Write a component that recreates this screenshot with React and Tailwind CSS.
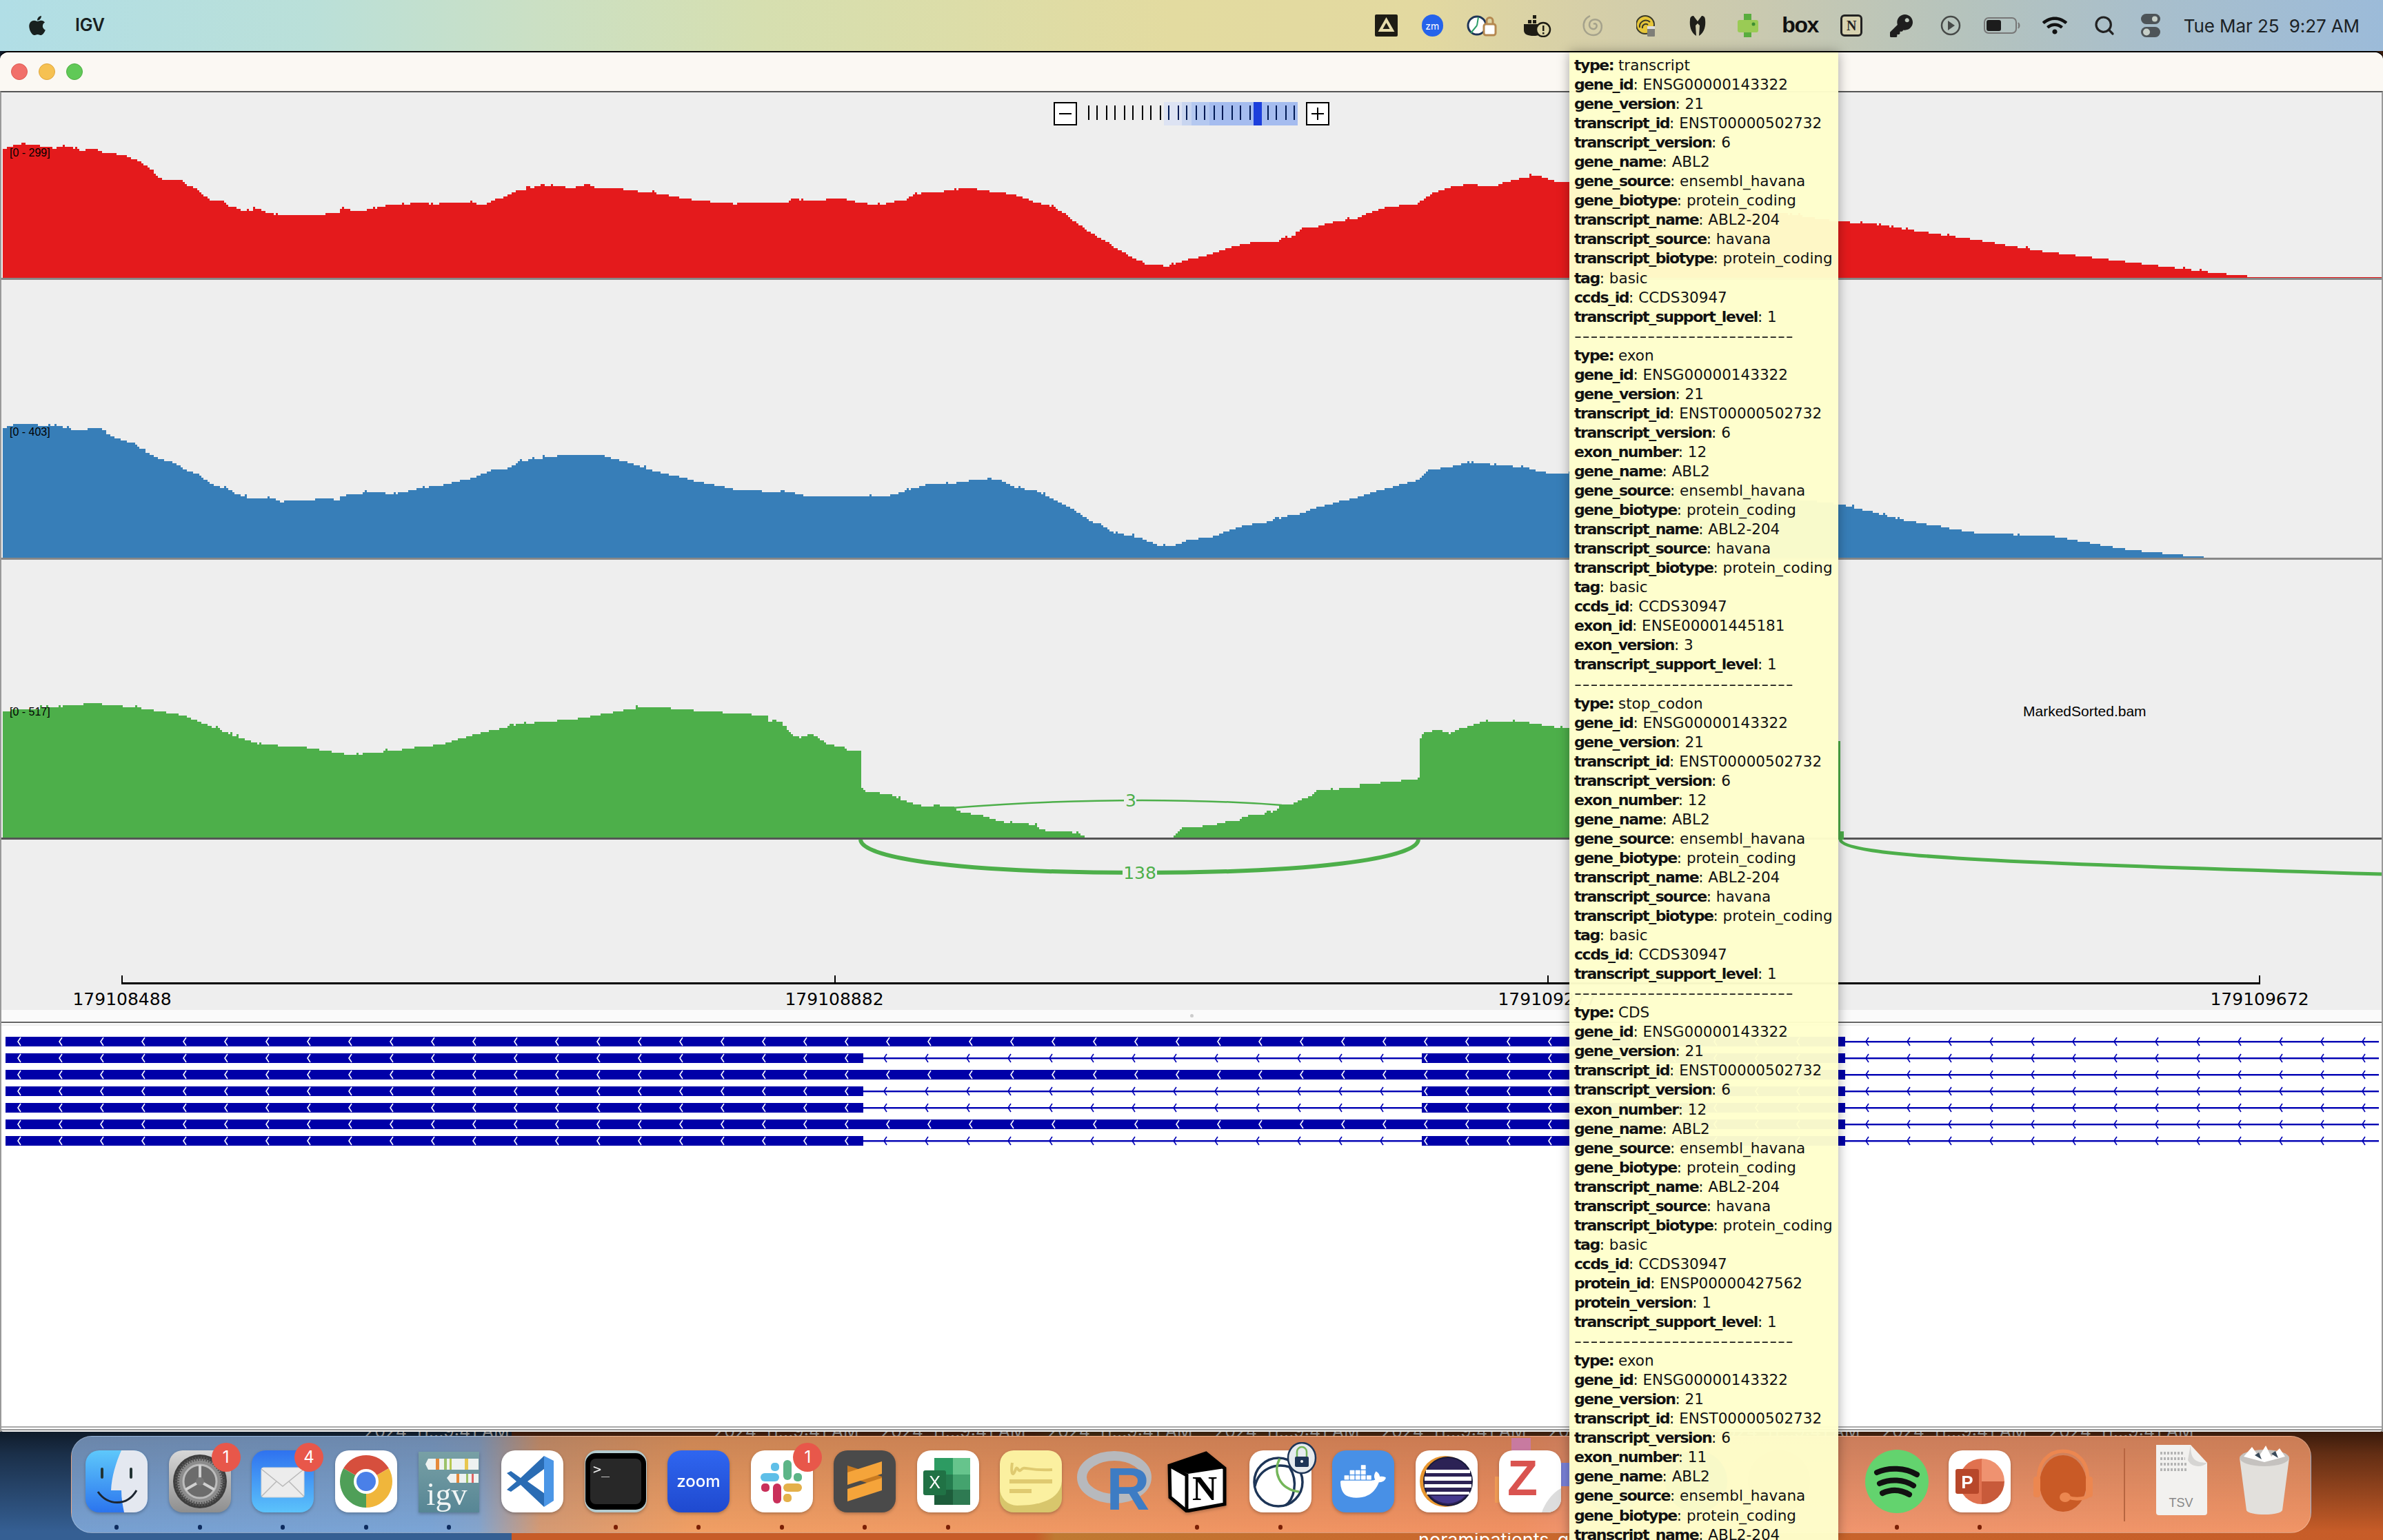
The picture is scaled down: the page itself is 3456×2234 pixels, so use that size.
import React from "react";
import { FaApple, FaKey, FaWifi } from "react-icons/fa";
import { SiDocker } from "react-icons/si";
import { Search } from "lucide-react";

/* ---------- coverage data (page coordinates) ---------- */
const z11 = (a) => a.map(([x, y]) => [x / 1.363, 190 + y / 2.489]);
const z12 = (a) => a.map(([x, y]) => [1150 + x / 1.382, 190 + y / 2.489]);
const sh = (a) => a.map(([x, y]) => [x * 2.2041, y * 2.2035]);

const RED = [
  ...z11([[5,65],[30,50],[45,45],[65,52],[92,55],[105,62],[140,58],[160,72],[185,62],[205,80],[225,82],[250,92],[275,110],[290,130],[305,160],[320,173],[355,175],[370,198],[385,205],[395,225],[415,250],[440,255],[460,283],[490,288],[510,282],[530,297],[545,303],[630,305],[650,296],[668,295],[673,275],[700,290],[730,284],[760,270],[800,270],[820,255],[850,264],[900,260],[930,255],[945,268],[960,265],[970,250],[995,240],[1010,222],[1030,213],[1070,195],[1110,200],[1125,207],[1160,193],[1180,207],[1220,208],[1260,218],[1310,228],[1350,245],[1400,255],[1450,263],[1500,258],[1560,258]]),
  ...z12([[0,245],[40,255],[90,240],[130,258],[170,268],[200,255],[225,248],[240,228],[300,218],[350,205],[400,220],[440,228],[470,250],[520,275],[540,295],[565,330],[600,375],[630,405],[660,440],[680,460],[710,485],[750,487],[790,465],[830,448],[870,422],[910,405],[970,398],[1000,380],[1020,352],[1050,345],[1080,330],[1130,315],[1160,290],[1190,275],[1250,263],[1280,225],[1310,205],[1350,192],[1400,203],[1440,178],[1490,160],[1530,185],[1562,185]]),
  ...sh([[1210,146],[1230,147],[1260,152],[1300,158],[1340,165],[1380,170],[1420,175],[1460,180],[1490,183],[1567,183]]),
];
const BLUE = [
  ...z11([[5,1072],[25,1060],[60,1056],[90,1068],[120,1068],[150,1082],[190,1072],[205,1078],[210,1095],[240,1118],[265,1128],[285,1160],[310,1182],[345,1198],[360,1222],[390,1240],[420,1280],[455,1298],[475,1322],[540,1328],[555,1342],[565,1335],[615,1332],[635,1326],[668,1332],[672,1320],[690,1312],[730,1305],[780,1310],[830,1290],[870,1280],[900,1265],[930,1255],[970,1225],[1000,1220],[1030,1192],[1080,1178],[1120,1168],[1185,1170],[1230,1192],[1260,1210],[1300,1232],[1345,1250],[1380,1268],[1430,1285],[1460,1298],[1530,1302],[1560,1306]]),
  ...z12([[0,1310],[40,1322],[130,1320],[190,1318],[230,1296],[270,1275],[310,1278],[340,1265],[390,1255],[410,1258],[440,1285],[490,1302],[520,1330],[560,1365],[590,1405],[625,1430],[640,1450],[700,1472],[730,1498],[760,1500],[790,1475],[830,1470],[870,1445],[900,1425],[950,1412],[980,1395],[1010,1385],[1050,1358],[1110,1333],[1160,1305],[1200,1285],[1255,1258],[1270,1225],[1310,1215],[1360,1195],[1400,1205],[1470,1215],[1490,1228],[1530,1240],[1562,1235]]),
  ...sh([[1210,332],[1250,342],[1300,351],[1350,353],[1400,362],[1450,367],[1470,368],[1567,368]]),
];
const GREEN = [
  ...sh([[2,468],[30,466],[60,463],[90,466],[120,471],[150,483],[170,490],[200,492],[230,497],[260,494],[290,490],[310,484],[340,477],[380,473],[425,465],[460,468],[490,470]]),
  [1100,1038],[1111,1038],[1113,1046],[1130,1046],[1138,1055],[1150,1068],[1160,1070],[1176,1064],[1199,1080],[1221,1083],[1231,1090],[1247,1090],[1248,1144],[1253,1148],[1272,1150],[1291,1153],[1307,1160],[1323,1166],[1342,1170],[1355,1168],[1381,1171],[1393,1178],[1422,1183],[1444,1190],[1460,1194],[1500,1196],[1508,1204],[1534,1206],[1559,1208],[1575,1215],[1701,1215],[1706,1207],[1713,1200],[1754,1198],[1776,1192],[1795,1192],[1801,1186],[1811,1182],[1833,1182],[1849,1175],[1859,1166],[1875,1166],[1884,1160],[1900,1155],[1909,1146],[1951,1144],[1969,1144],[1970,1138],[1996,1136],[2034,1132],[2055,1132],[2055,1128],[2058,1128],[2059,1070],[2063,1064],[2082,1058],[2100,1064],[2150,1046],[2200,1046],[2276,1058],[2300,1216],
];

function profile(points, base, seed) {
  const x0 = 4;
  const x1 = points[points.length - 1][0];
  let i = 0;
  let d = `M${x0} ${base}`;
  let n = 0;
  for (let x = x0; x < x1; x += 3) {
    while (i < points.length - 2 && points[i + 1][0] <= x) i++;
    const [ax, ay] = points[i];
    const [bx, by] = points[i + 1];
    const t = bx === ax ? 1 : Math.min(1, Math.max(0, (x - ax) / (bx - ax)));
    let y = ay + (by - ay) * t;
    const h = Math.abs(Math.sin((n + seed) * 12.9898) * 43758.5453) % 1;
    if (h > 0.95 && y < base - 6) y -= 3;
    y = Math.min(base, Math.round(y / 3) * 3);
    d += `L${x} ${y}L${x + 3} ${y}`;
    n++;
  }
  return d + `L${x1} ${base}Z`;
}

function Coverage({ top, height, base, points, color, seed, line, children }) {
  return (
    <svg className="block" width="3452" height={height} viewBox={`2 ${top} 3452 ${height}`} shapeRendering="crispEdges">
      <path d={profile(points, base, seed)} fill={color} />
      <rect x="2" y={base} width="3452" height="3" fill={line} />
      {children}
    </svg>
  );
}

/* ---------- popup text ---------- */
const GID = ["gene_id", "ENSG00000143322"];
const GV = ["gene_version", "21"];
const TID = ["transcript_id", "ENST00000502732"];
const TV = ["transcript_version", "6"];
const GN = ["gene_name", "ABL2"];
const GS = ["gene_source", "ensembl_havana"];
const GB = ["gene_biotype", "protein_coding"];
const TN = ["transcript_name", "ABL2-204"];
const TS = ["transcript_source", "havana"];
const TB = ["transcript_biotype", "protein_coding"];
const TAG = ["tag", "basic"];
const CC = ["ccds_id", "CCDS30947"];
const TSL = ["transcript_support_level", "1"];
const DASH = ["---"];
const EN = (n) => ["exon_number", n];
const TY = (t) => ["type", t];
const POPUP = [
  TY("transcript"), GID, GV, TID, TV, GN, GS, GB, TN, TS, TB, TAG, CC, TSL, DASH,
  TY("exon"), GID, GV, TID, TV, EN("12"), GN, GS, GB, TN, TS, TB, TAG, CC, ["exon_id", "ENSE00001445181"], ["exon_version", "3"], TSL, DASH,
  TY("stop_codon"), GID, GV, TID, TV, EN("12"), GN, GS, GB, TN, TS, TB, TAG, CC, TSL, DASH,
  TY("CDS"), GID, GV, TID, TV, EN("12"), GN, GS, GB, TN, TS, TB, TAG, CC, ["protein_id", "ENSP00000427562"], ["protein_version", "1"], TSL, DASH,
  TY("exon"), GID, GV, TID, TV, EN("11"), GN, GS, GB, TN,
];

function Popup() {
  return (
    <div className="absolute left-[2276px] top-[76px] bottom-0 z-[4] w-[390px] overflow-hidden bg-[#ffffcc]/[.965] pl-[7px] pt-[5px] shadow-[0_0_16px_rgba(0,0,0,.35)] font-['DejaVu_Sans',sans-serif] text-[21.5px] leading-[28.04px] text-[#111] whitespace-nowrap">
      {POPUP.map((l, i) =>
        l[0] === "---" ? (
          <div key={i} className="w-max origin-left scale-x-[1.42] tracking-[0.55px]">{"-".repeat(27)}</div>
        ) : (
          <div key={i}>
            <b className="text-[22px] font-bold tracking-[-1.45px]">{l[0]}{l[0] === "type" ? ":" : ""}</b>
            {l[0] === "type" ? " " : ": "}
            {l[1]}
          </div>
        )
      )}
    </div>
  );
}

/* ---------- menu bar ---------- */
const MENU = [
  ["w-[67px]", <svg width="33" height="32" viewBox="0 0 33 32"><rect width="33" height="32" rx="2" fill="#1e1c14" /><path d="M16.5 8 L25 23 H8Z" fill="none" stroke="#e6dcab" strokeWidth="4" /></svg>],
  ["w-[67px]", <div className="flex h-[32px] w-[31px] items-center justify-center rounded-full bg-[#2563eb] font-['Inter',sans-serif] text-[14px] text-white">zm</div>],
  ["w-[77px]", <svg width="46" height="34" viewBox="0 0 46 34"><circle cx="16" cy="17" r="13" fill="#fff" stroke="#1f3557" strokeWidth="3" /><path d="M16 17 L7 28 M16 17 L18 5" stroke="#2f9e6a" strokeWidth="2" fill="none" /><rect x="26" y="15" width="17" height="16" rx="3" fill="#fff" stroke="#b58850" strokeWidth="3" /><path d="M30 15 V10 a4.5 4.5 0 0 1 9 0 V15" fill="none" stroke="#b58850" strokeWidth="3" /></svg>],
  ["w-[83px]", <svg width="42" height="34" viewBox="0 0 42 34"><path d="M2 15 H30 V24 C30 30 24 32 16 32 C8 32 2 30 2 24Z" fill="#1e1c14" /><rect x="8" y="9" width="5" height="5" fill="#1e1c14" /><rect x="15" y="9" width="5" height="5" fill="#1e1c14" /><rect x="15" y="2" width="5" height="5" fill="#1e1c14" /><circle cx="30" cy="23" r="10" fill="#ded7a8" stroke="#1e1c14" strokeWidth="2.5" /><rect x="29" y="17" width="2.5" height="8" fill="#1e1c14" /><rect x="29" y="27" width="2.5" height="2.5" fill="#1e1c14" /></svg>],
  ["w-[79px]", <svg width="34" height="34" viewBox="0 0 34 34" fill="none" stroke="#a5a28c" strokeWidth="2.5"><path d="M13 3 C5 7 3 14 4 20 C6 29 15 33 23 30 C31 26 32 15 26 10 C20 6 12 9 12 16 C12 22 19 24 22 20 C24 16 21 13 18 15" /></svg>],
  ["w-[75.5px]", <svg width="30" height="34" viewBox="0 0 30 34"><circle cx="13" cy="16" r="13" fill="#e6c63a" stroke="#3a3a2a" strokeWidth="2" /><path d="M5 20 a9 9 0 0 1 15 -8 M9 21 a5 5 0 0 1 8 -5" stroke="#3a3a2a" strokeWidth="2" fill="none" /><rect x="16" y="18" width="11" height="15" rx="1" fill="#7f7f78" /><rect x="16" y="18" width="11" height="4" fill="#ddd" /></svg>],
  ["w-[73px]", <svg width="26" height="32" viewBox="0 0 26 32"><path d="M2 8 C2 4 4 2 7 2 L13 10 L19 2 C22 2 24 4 24 8 C25 16 23 26 15 31 L16 16 L13 13 L10 16 L11 31 C3 26 1 16 2 8Z" fill="#1e1e1a" /></svg>],
  ["w-[74px]", <svg width="30" height="34" viewBox="0 0 30 34"><rect x="9" y="0" width="11" height="34" fill="#5aad3f" /><rect x="0" y="9" width="30" height="18" rx="3" fill="#9acb55" /><circle cx="23" cy="15" r="2.5" fill="#3e8e32" /></svg>],
  ["w-[76.5px]", <span className="font-['Liberation_Sans',sans-serif] text-[32px] font-bold leading-none tracking-[-1.5px] text-[#111] relative top-[-1px]">box</span>],
  ["w-[73px]", <div className="flex h-[32px] w-[32px] items-center justify-center rounded-[6px] border-[3px] border-[#222] bg-[#d7d2b0] font-['Liberation_Serif',serif] text-[20px] font-bold text-[#222]">N</div>],
  ["w-[70.5px]", <FaKey className="text-[#1e1e1e]" size={33} />],
  ["w-[72.5px]", <svg width="30" height="32" viewBox="0 0 30 32"><circle cx="15" cy="16" r="13" fill="none" stroke="#474a48" strokeWidth="2.5" /><path d="M11 9 L21 16 L11 23Z" fill="#474a48" /></svg>],
  ["w-[77.5px]", <svg width="54" height="26" viewBox="0 0 54 26"><rect x="1" y="2" width="46" height="22" rx="6" fill="none" stroke="#777" strokeWidth="2" /><rect x="4" y="5" width="21" height="16" rx="3" fill="#1c1c1c" /><path d="M50 9 q3 4 0 8" fill="#777" stroke="#777" strokeWidth="2" /></svg>],
  ["w-[76px]", <FaWifi className="text-[#111]" size={36} />],
  ["w-[68px]", <Search className="text-[#222]" size={32} strokeWidth={2.4} />],
  ["w-[65.5px]", <svg width="28" height="36" viewBox="0 0 28 36"><rect x="0" y="1" width="28" height="15" rx="7.5" fill="#4d5458" /><circle cx="20" cy="8.5" r="4" fill="#c6cfc8" /><rect x="0" y="20" width="28" height="15" rx="7.5" fill="#4d5458" /><circle cx="8" cy="27.5" r="5" fill="#c6cfc8" /></svg>],
];

function MenuBar() {
  return (
    <div className="flex h-[74px] shrink-0 items-center bg-[linear-gradient(90deg,#b1dee6_0px,#bae0d9_450px,#cbe0c4_780px,#d6dfb0_1100px,#e3dba0_1700px,#e3d9a0_2060px,#d6cfa8_2300px,#c9c9b0_2560px,#b5c3bd_2850px,#a9bfcb_3100px,#9cbbd9_3456px)]">
      <FaApple className="ml-[38px] text-[#18201f]" size={32} />
      <span className="ml-[39px] font-['Inter',sans-serif] text-[25px] font-semibold tracking-[-0.2px] text-[#18201f]">IGV</span>
      <div className="ml-auto flex items-center">
        {MENU.map(([w, el], i) => (
          <div key={i} className={`${w} flex justify-center`}>{el}</div>
        ))}
      </div>
      <span className="ml-[15px] mr-[34px] whitespace-pre font-['Inter',sans-serif] text-[26px] tracking-[-0.1px] text-[#1c2226]">Tue Mar 25  9:27 AM</span>
    </div>
  );
}

/* ---------- zoom slider ---------- */
const TICKS = [1578, 1590, 1604, 1616, 1630, 1642, 1656, 1668, 1682, 1694, 1708, 1720, 1734, 1746, 1760, 1772, 1786, 1798, 1812, 1838, 1850, 1864, 1876];

function Slider() {
  return (
    <div className="absolute left-[1526px] top-[14px] flex h-[34px] items-stretch">
      <div className="flex w-[34px] items-center justify-center border-2 border-black bg-white">
        <div className="h-[2px] w-[18px] bg-black" />
      </div>
      <div className="relative ml-[10px] w-[310px]">
        <div className="absolute inset-y-0 left-[116px] w-[26px] bg-[#dde3f3]" />
        <div className="absolute inset-y-0 left-[142px] w-[14px] bg-[#c8d5f0]" />
        <div className="absolute inset-y-0 left-[156px] w-[26px] bg-[#b4c8f0]" />
        <div className="absolute inset-y-0 left-[182px] w-[128px] bg-[#a5bcef]" />
        {TICKS.map((x) => (
          <div key={x} className={`absolute top-[5px] h-[21px] w-[2px] ${x < 1688 ? "bg-black" : "bg-[#001a55]"}`} style={{ left: x - 1572 }} />
        ))}
        <div className="absolute inset-y-0 left-[246px] w-[12px] bg-[#1c3fdc]" />
      </div>
      <div className="absolute left-[366px] flex h-[34px] w-[34px] items-center justify-center border-2 border-black bg-white">
        <div className="relative h-[18px] w-[18px]">
          <div className="absolute left-0 top-[8px] h-[2px] w-[18px] bg-black" />
          <div className="absolute left-[8px] top-0 h-[18px] w-[2px] bg-black" />
        </div>
      </div>
    </div>
  );
}

/* ---------- gene track ---------- */
function chevrons(xs, cy, color, key) {
  return xs.map((x) => (
    <path key={`${key}-${x}`} d={`M${x + 2} ${cy - 6} L${x - 2} ${cy} L${x + 2} ${cy + 6}`} stroke={color} strokeWidth="1.6" fill="none" />
  ));
}
const range = (a, b, s) => {
  const r = [];
  for (let x = a; x <= b; x += s) r.push(x);
  return r;
};

function GeneTrack() {
  const rows = [true, false, true, false, false, true, false];
  return (
    <svg className="block" width="3452" height="584" viewBox="2 1484 3452 584">
      <rect x="2" y="1486" width="3452" height="2" fill="#efefef" />
      {rows.map((full, i) => {
        const cy = 1511 + 24 * i;
        const thick = (a, b) => <rect x={a} y={cy - 7} width={b - a} height="14" fill="#0000a8" />;
        return (
          <g key={i}>
            <rect x="2672" y={cy - 1} width="778" height="2.4" fill="#0000b4" />
            {full ? (
              thick(8, 2676)
            ) : (
              <g>
                {thick(8, 1252)}
                <rect x="1252" y={cy - 1} width="810" height="2.4" fill="#0000b4" />
                {thick(2062, 2676)}
              </g>
            )}
            {chevrons(range(28, full ? 2660 : 1240, 60), cy, "#fff", "w" + i)}
            {!full && chevrons(range(2068, 2660, 60), cy, "#fff", "x" + i)}
            {!full && chevrons(range(1284, 2040, 60), cy, "#0000b4", "b" + i)}
            {chevrons(range(2708, 3440, 60), cy, "#0000b4", "r" + i)}
          </g>
        );
      })}
    </svg>
  );
}

/* ---------- dock icons ---------- */
const Box = ({ children, className = "" }) => (
  <svg className={`drop-shadow-[0_2px_2px_rgba(0,0,0,.25)] ${className}`} width="90" height="90" viewBox="0 0 90 90">{children}</svg>
);
const Grad = ({ id, from, to }) => (
  <defs><linearGradient id={id} x1="0" y1="0" x2="0" y2="1"><stop offset="0" stopColor={from} /><stop offset="1" stopColor={to} /></linearGradient></defs>
);
const W = () => <rect width="90" height="90" rx="20" fill="#fff" />;

const Finder = () => (
  <Box>
    <Grad id="fi" from="#5ec8fb" to="#2b74ee" />
    <rect width="90" height="90" rx="20" fill="url(#fi)" />
    <path d="M52 0 H70 A20 20 0 0 1 90 20 V70 A20 20 0 0 1 70 90 H56 C54 80 52 70 52 58 H37 C38 38 44 18 52 0Z" fill="#e4e8f0" />
    <rect x="22" y="25" width="4" height="16" rx="2" fill="#233" />
    <rect x="64" y="25" width="4" height="16" rx="2" fill="#233" />
    <path d="M18 60 C32 80 60 82 74 58" stroke="#1c2530" strokeWidth="3" fill="none" />
  </Box>
);
const Settings = () => (
  <Box>
    <Grad id="se" from="#d8d8d8" to="#8e8e8e" />
    <rect width="90" height="90" rx="20" fill="url(#se)" />
    <circle cx="45" cy="45" r="39" fill="#3e3e3e" />
    <circle cx="45" cy="45" r="33" fill="#8c8c8c" stroke="#555" strokeWidth="6" strokeDasharray="2 2" />
    <circle cx="45" cy="45" r="24" fill="#6c6c6c" stroke="#bbb" strokeWidth="3" />
    <path d="M45 45 V21 M45 45 L24 57 M45 45 L66 57" stroke="#d0d0d0" strokeWidth="4" />
    <circle cx="45" cy="45" r="6" fill="#777" />
  </Box>
);
const Mail = () => (
  <Box>
    <Grad id="ma" from="#2f72ef" to="#5cc3fb" />
    <rect width="90" height="90" rx="20" fill="url(#ma)" />
    <rect x="14" y="25" width="62" height="43" rx="3" fill="#ececec" stroke="#d5d5d5" />
    <path d="M14 27 L45 52 L76 27 M14 67 L36 45 M76 67 L54 45" stroke="#b9b9b9" strokeWidth="1.5" fill="none" />
  </Box>
);
const Chrome = () => (
  <Box>
    <W />
    <path d="M45 45 L12.1 26 A38 38 0 0 1 77.9 26Z" fill="#d64f3d" />
    <path d="M45 45 L77.9 26 A38 38 0 0 1 45 83Z" fill="#f0b63b" />
    <path d="M45 45 L45 83 A38 38 0 0 1 12.1 26Z" fill="#4f9f58" />
    <circle cx="45" cy="45" r="18" fill="#fff" />
    <circle cx="45" cy="45" r="14" fill="#4a80e8" />
  </Box>
);
const Igv = () => (
  <Box>
    <Grad id="ig" from="#78a0a5" to="#578695" />
    <rect x="1" y="2" width="88" height="88" fill="url(#ig)" />
    <path d="M15 12 H88 V28 H15 L11 20Z" fill="#eef2f0" />
    <rect x="26" y="12" width="5" height="16" fill="#e58a3a" />
    <rect x="38" y="12" width="4" height="16" fill="#9cc26a" />
    <rect x="46" y="12" width="3" height="16" fill="#b7c84f" />
    <rect x="68" y="12" width="5" height="16" fill="#e8c74f" />
    <path d="M47 34 H88 V47 H47 L42 40Z" fill="#eef2f0" />
    <rect x="56" y="34" width="4" height="13" fill="#e58a3a" />
    <rect x="70" y="34" width="3" height="13" fill="#9cc26a" />
    <rect x="78" y="34" width="3" height="13" fill="#d66" />
    <text x="42" y="79" textAnchor="middle" fontFamily="'Liberation Serif',serif" fontSize="46" fill="#f0f5f5">igv</text>
  </Box>
);
const VsCode = () => (
  <Box>
    <W />
    <path d="M62 8 L76 15 V73 L62 82Z" fill="#4b96e6" />
    <path d="M62 8 L28 40 L14 30 L8 33 L22 45 L8 57 L14 60 L28 50 L62 82 V62 L38 45 L62 27Z" fill="#2a6cb4" />
  </Box>
);
const Terminal = () => (
  <Box>
    <rect width="90" height="90" rx="18" fill="#b4ccd0" />
    <rect x="1" y="4" width="88" height="82" rx="15" fill="#000" />
    <rect x="8" y="12" width="74" height="66" rx="8" fill="#282828" />
    <text x="12" y="34" fontFamily="'DejaVu Sans Mono',monospace" fontSize="20" fill="#eee">&gt;_</text>
  </Box>
);
const Zoom = () => (
  <Box>
    <Grad id="zo" from="#2f66f0" to="#1f49cf" />
    <rect width="90" height="90" rx="20" fill="url(#zo)" />
    <text x="45" y="53" textAnchor="middle" fontFamily="'Inter',sans-serif" fontSize="24" fontWeight="500" fill="#fff">zoom</text>
  </Box>
);
const Slack = () => (
  <Box>
    <W />
    <rect x="14" y="33" width="27" height="12" rx="6" fill="#5fbfe8" />
    <rect x="29" y="18" width="12" height="12" rx="5" fill="#5fbfe8" />
    <rect x="47" y="14" width="12" height="29" rx="6" fill="#5cb587" />
    <rect x="62" y="33" width="12" height="12" rx="5" fill="#5cb587" />
    <rect x="32" y="48" width="12" height="29" rx="6" fill="#c9305a" />
    <rect x="15" y="48" width="12" height="12" rx="5" fill="#c9305a" />
    <rect x="47" y="48" width="27" height="12" rx="6" fill="#e4b04a" />
    <rect x="47" y="63" width="12" height="12" rx="5" fill="#e4b04a" />
  </Box>
);
const Sublime = () => (
  <Box>
    <rect width="90" height="90" rx="20" fill="#4a4a4a" />
    <path d="M20 38 L70 54 V38 L20 22Z" fill="#c87a20" />
    <path d="M20 32 L70 16 V34 L20 50Z" fill="#f5a43a" />
    <path d="M20 56 L70 40 V58 L20 74Z" fill="#f5a43a" />
  </Box>
);
const Excel = () => (
  <Box>
    <W />
    <rect x="25" y="11" width="27" height="24" fill="#2d9b62" />
    <rect x="52" y="11" width="25" height="24" fill="#66c48c" />
    <rect x="25" y="35" width="27" height="22" fill="#247c4e" />
    <rect x="52" y="35" width="25" height="22" fill="#44a36e" />
    <rect x="25" y="57" width="27" height="22" fill="#1d5d3b" />
    <rect x="52" y="57" width="25" height="22" fill="#2e7a52" />
    <rect x="9" y="29" width="33" height="36" rx="3" fill="#207245" />
    <text x="25.5" y="55" textAnchor="middle" fontFamily="'Liberation Sans',sans-serif" fontSize="25" fill="#fff">X</text>
  </Box>
);
const Stickies = () => (
  <Box>
    <rect y="30" width="90" height="60" rx="20" fill="#d8c66c" />
    <path d="M0 20 A20 20 0 0 1 20 0 H70 A20 20 0 0 1 90 20 V45 C88 65 70 80 25 80 A25 25 0 0 1 0 55Z" fill="#fbf0a0" />
    <path d="M18 18 C16 30 18 40 22 30 C26 18 26 34 31 28 C36 22 40 30 76 28" stroke="#dfca70" strokeWidth="4" fill="none" />
    <rect x="14" y="42" width="62" height="6" fill="#dfca70" />
    <rect x="14" y="56" width="32" height="6" fill="#dfca70" />
  </Box>
);
const RLogo = () => (
  <div className="relative flex h-[90px] w-[110px] items-center justify-center">
    <svg width="110" height="90" viewBox="0 0 110 90" className="absolute"><ellipse cx="55" cy="39" rx="47" ry="31" fill="none" stroke="#b7b9bd" strokeWidth="14" /></svg>
    <span className="relative left-[20px] top-[10px] font-['Liberation_Sans',sans-serif] text-[87px] font-bold leading-none text-[#3d7cc4]">R</span>
  </div>
);
const Notion = () => (
  <Box>
    <path d="M5 22 L58 4 L85 26 V78 L30 88 L6 68Z" fill="#fff" stroke="#000" strokeWidth="5" />
    <path d="M5 22 L32 34 L85 26 L58 4Z" fill="#000" />
    <path d="M5 22 L30 36 V88" stroke="#000" strokeWidth="5" fill="none" />
    <text x="56" y="72" textAnchor="middle" fontFamily="'Liberation Serif',serif" fontSize="50" fontWeight="700" fill="#000">N</text>
  </Box>
);
const GlobalProtect = () => (
  <Box>
    <W />
    <circle cx="42" cy="46" r="35" fill="none" stroke="#1d3557" strokeWidth="3.5" />
    <path d="M8 52 C14 26 38 18 58 24 C72 46 64 72 52 80" fill="none" stroke="#1d3557" strokeWidth="3.5" />
    <path d="M44 12 C34 30 42 56 72 60" fill="none" stroke="#74b65a" strokeWidth="3.5" />
  </Box>
);
const Docker = () => (
  <div className="flex h-[90px] w-[90px] items-center justify-center rounded-[20px] bg-[#4890e6] text-white drop-shadow-[0_2px_2px_rgba(0,0,0,.25)]">
    <SiDocker size={66} />
  </div>
);
const Eclipse = () => (
  <Box>
    <W />
    <circle cx="43" cy="45" r="37" fill="#e8962f" />
    <circle cx="47" cy="45" r="36" fill="#181a3a" />
    <circle cx="47" cy="45" r="34" fill="#2c2255" />
    <path d="M13 38 H81 V44 H13Z M13 49 H81 V54 H13Z M16 60 H78 V64 H16Z M15 28 H79 V33 H15Z" fill="#fff" />
    <path d="M22 66 H72 A34 34 0 0 1 22 66Z" fill="#45388d" />
  </Box>
);
const ZIcon = () => (
  <div className="relative h-[90px] w-[90px]">
    <div className="absolute left-[18px] top-[-18px] h-[20px] w-[28px] bg-[#c87aa0]" />
    <div className="absolute left-[-6px] top-[38px] h-[38px] w-[8px] bg-[#ee9a55]" />
    <div className="absolute right-[-14px] top-[18px] h-[34px] w-[16px] bg-[#7c84dc]" />
    <Box className="relative">
      <W />
      <text x="34" y="65" textAnchor="middle" fontFamily="'Liberation Sans',sans-serif" fontSize="72" fontWeight="700" fill="#d9534f">Z</text>
      <path d="M90 55 V70 A20 20 0 0 1 70 90 H62 C66 78 76 62 90 55Z" fill="#ddd" />
    </Box>
  </div>
);
const Faint = ({ c }) => <div className={`h-[90px] w-[90px] rounded-full ${c}`} />;
const Spotify = () => (
  <svg width="92" height="92" viewBox="0 0 92 92">
    <circle cx="46" cy="46" r="46" fill="#63d36e" />
    <path d="M17 33 C34 25 58 26 75 36 M21 49 C36 42 56 43 70 52 M25 63 C38 57 52 58 64 65" fill="none" stroke="#111" strokeWidth="8" strokeLinecap="round" />
  </svg>
);
const Ppt = () => (
  <Box>
    <W />
    <path d="M48 12 A33 33 0 0 1 81 45 H48Z" fill="#ef9270" />
    <path d="M48 45 H81 A33 33 0 0 1 48 78Z" fill="#c85a3a" />
    <path d="M48 12 A33 33 0 1 0 48 78Z" fill="#e0714f" />
    <rect x="10" y="27" width="34" height="36" rx="3" fill="#b7472a" />
    <text x="27" y="55" textAnchor="middle" fontFamily="'Liberation Sans',sans-serif" fontSize="26" fontWeight="700" fill="#fff">P</text>
  </Box>
);
const Headset = () => (
  <svg width="94" height="94" viewBox="0 0 94 94">
    <path d="M12 50 C8 18 28 3 47 3 C66 3 86 18 82 50" fill="none" stroke="#ec8750" strokeWidth="5" />
    <ellipse cx="47" cy="50" rx="34" ry="41" fill="#c95a26" />
    <rect x="4" y="40" width="10" height="30" rx="4" fill="#ec8750" />
    <rect x="80" y="40" width="10" height="30" rx="4" fill="#ec8750" />
    <path d="M84 66 C84 72 66 74 54 70 " fill="none" stroke="#ec8750" strokeWidth="5" />
    <ellipse cx="50" cy="70" rx="8" ry="7" fill="#ec8750" />
  </svg>
);
const Tsv = () => (
  <svg width="74" height="106" viewBox="0 0 74 106">
    <path d="M0 2 H50 L74 28 V100 Q74 104 70 104 H4 Q0 104 0 100Z" fill="#f2f1ef" />
    <path d="M50 2 C50 20 54 28 74 28 C66 36 50 34 46 24Z" fill="#d6d5d3" />
    <path d="M6 14 H40 M6 22 H42 M6 30 H44 M6 38 H46" stroke="#b4b4b4" strokeWidth="4" strokeDasharray="3 2" />
    <text x="36" y="92" textAnchor="middle" fontFamily="'Liberation Sans',sans-serif" fontSize="18" fill="#888">TSV</text>
  </svg>
);
const Trash = () => (
  <svg width="80" height="104" viewBox="0 0 80 104">
    <path d="M4 20 C14 26 66 26 76 20 L66 96 C62 104 18 104 14 96Z" fill="#e2e0dc" />
    <ellipse cx="40" cy="20" rx="36" ry="12" fill="#c5c2bf" />
    <path d="M10 18 L22 4 L32 18 L42 2 L50 18 L62 6 L70 18 L40 26Z" fill="#ffffff" />
    <path d="M26 16 L32 12 L36 22Z M50 14 L56 10 L60 20Z" fill="#3a4a5a" />
  </svg>
);

const Badge = ({ n }) => (
  <div className="absolute left-[77px] top-[9px] flex h-[42px] w-[42px] items-center justify-center rounded-full bg-[#e8574a] font-['Inter',sans-serif] text-[24px] text-white">{n}</div>
);

const DOCK = [
  [Finder, true], [Settings, true, "1"], [Mail, true, "4"], [Chrome, true], [Igv, true],
  [VsCode, false], [Terminal, true], [Zoom, true], [Slack, true, "1"], [Sublime, true],
  [Excel, true], [Stickies, false], [RLogo, false], [Notion, true], [GlobalProtect, true],
  [Docker, false], [Eclipse, false], [ZIcon, false],
];

function Slot({ Icon, dot, badge, dark }) {
  return (
    <div className="relative flex h-full w-[120.55px] shrink-0 justify-center pt-[20px]">
      <div className="relative">
        <Icon />
      </div>
      {badge && <Badge n={badge} />}
      {dot && <div className={`absolute bottom-[4px] left-1/2 h-[7px] w-[6px] -translate-x-1/2 rounded-full ${dark ? "bg-[#0d2b5e]" : "bg-[#7a1f05]"}`} />}
    </div>
  );
}

function Dock() {
  return (
    <div className="relative ml-[103px] mt-[6px] flex h-[141px] w-[3249px] shrink-0 rounded-[30px] border border-white/25 bg-[linear-gradient(180deg,rgba(90,70,60,.25),rgba(255,255,255,.05)),linear-gradient(90deg,#709bcf_0px,#74a0d4_520px,#7ea0cb_590px,#d3956d_680px,#f09a5c_900px,#f0925b_1500px,#f08b5a_2100px,#f0906a_2200px,#f08f5e_3249px)] pl-[5px]">
      {DOCK.map(([Icon, dot, badge], i) => (
        <Slot key={i} Icon={Icon} dot={dot} badge={badge} dark={i < 5} />
      ))}
      <div className="flex h-full w-[120.55px] shrink-0 justify-center pt-[20px]"><Faint c="bg-[#7a6cd0]" /></div>
      <div className="flex h-full w-[120.55px] shrink-0 justify-center pt-[20px]"><Faint c="bg-[#3a4a60]" /></div>
      <div className="flex h-full w-[120.55px] shrink-0 justify-center pt-[20px]"><Faint c="bg-[#d06a30]" /></div>
      <div className="w-[51px] shrink-0" />
      <div className="relative flex h-full w-[120px] shrink-0 justify-center pt-[19px]">
        <Spotify />
        <div className="absolute bottom-[4px] left-1/2 h-[7px] w-[6px] -translate-x-1/2 rounded-full bg-[#7a1f05]" />
      </div>
      <div className="relative flex h-full w-[120px] shrink-0 justify-center pt-[20px]">
        <Ppt />
        <div className="absolute bottom-[4px] left-1/2 h-[7px] w-[6px] -translate-x-1/2 rounded-full bg-[#7a1f05]" />
      </div>
      <div className="flex h-full w-[121px] shrink-0 justify-center pt-[18px]"><Headset /></div>
      <div className="ml-[28px] mt-[17px] h-[106px] w-[2px] shrink-0 bg-[#b76540]" />
      <div className="ml-[22px] flex h-full w-[120px] shrink-0 justify-center pt-[10px]"><Tsv /></div>
      <div className="flex h-full w-[120px] shrink-0 justify-center pt-[11px]"><Trash /></div>
    </div>
  );
}

/* ---------- page ---------- */
export default function App() {
  const numLabel = "absolute left-[12px] font-['Liberation_Sans',sans-serif] text-[16px] leading-none text-black";
  return (
    <div className="relative flex h-[2234px] w-[3456px] flex-col overflow-hidden bg-[linear-gradient(180deg,rgba(0,0,0,.72)_2076px,rgba(0,0,0,.5)_2110px,rgba(0,0,0,.1)_2200px,rgba(0,0,0,0)_2222px),linear-gradient(90deg,#355f93_0px,#355f93_742px,#c75c28_742px,#c75c28_1500px,#bf7a32_1530px,#c96a2e_2000px,#c75c28_3456px)]">
      <MenuBar />

      <div className="relative z-[1] flex h-[2003px] shrink-0 flex-col rounded-[12px] border-t-2 border-black bg-white">
        <div className="flex h-[56px] shrink-0 items-center gap-[16px] rounded-t-[12px] bg-[#fbf8f3] pl-[16px]">
          <div className="h-[24px] w-[24px] rounded-full border border-[#dd5a50] bg-[#f1706a]" />
          <div className="h-[24px] w-[24px] rounded-full border border-[#dfa63e] bg-[#f6c152]" />
          <div className="h-[24px] w-[24px] rounded-full border border-[#4fae44] bg-[#60c957]" />
        </div>
        <div className="relative flex flex-1 flex-col border-x-2 border-t-2 border-x-[#999] border-t-[#555]">
          <div className="bg-[#eeeeee]">
            <div className="relative">
              <Coverage top={134} height={272} base={403} points={RED} color="#e41a1c" seed={1} line="#888" />
              <span className={`${numLabel} top-[80px]`}>[0 - 299]</span>
            </div>
            <div className="relative">
              <Coverage top={406} height={407} base={809} points={BLUE} color="#377eb8" seed={5} line="#888" />
              <span className={`${numLabel} top-[213px]`}>[0 - 403]</span>
            </div>
            <div className="relative">
              <Coverage top={813} height={587} base={1215} points={GREEN} color="#4daf4a" seed={9} line="#555">
                <g shapeRendering="auto" fill="none" stroke="#4daf4a">
                  <path d="M1248 1218 C1250 1246 1400 1266 1653 1266 C1900 1266 2055 1246 2057 1218" strokeWidth="6" />
                  <path d="M1381 1172 Q1640 1152 1859 1168" strokeWidth="2.5" />
                  <path d="M2669 1218 C2672 1242 2900 1252 3456 1268" strokeWidth="5" />
                </g>
                <rect x="2666" y="1075" width="3" height="141" fill="#4daf4a" />
                <rect x="2666" y="1206" width="8" height="12" fill="#4daf4a" />
                <rect x="1628" y="1252" width="50" height="28" fill="#eeeeee" />
                <rect x="1630" y="1148" width="18" height="26" fill="#eeeeee" />
                <g shapeRendering="auto" fontFamily="'DejaVu Sans',sans-serif" fontSize="25" fill="#4daf4a" textAnchor="middle">
                  <text x="1653" y="1275">138</text>
                  <text x="1640" y="1170">3</text>
                </g>
              </Coverage>
              <span className={`${numLabel} top-[212px]`}>[0 - 517]</span>
              <span className="absolute left-[2932px] top-[208px] font-['Liberation_Sans',sans-serif] text-[21px] leading-none text-black">MarkedSorted.bam</span>
            </div>
            <svg className="block" width="3452" height="65" viewBox="2 1400 3452 65">
              <rect x="176" y="1425" width="3102" height="3" fill="#000" />
              {[176, 1210, 2244, 3276].map((x) => (
                <rect key={x} x={x} y="1415" width="2" height="11" fill="#000" />
              ))}
              <g fontFamily="'DejaVu Sans',sans-serif" fontSize="25" fill="#000" textAnchor="middle">
                <text x="177" y="1458">179108488</text>
                <text x="1210" y="1458">179108882</text>
                <text x="2244" y="1458">179109277</text>
                <text x="3277" y="1458">179109672</text>
              </g>
            </svg>
          </div>
          <Slider />
          <div className="flex h-[17px] items-center justify-center bg-[#fafafa]">
            <div className="h-[5px] w-[5px] rounded-full bg-[#ccc]" />
          </div>
          <div className="h-[2px] bg-[#666]" />
          <div className="flex-1 bg-white">
            <GeneTrack />
          </div>
          <div className="h-[2px] bg-[#aaa]" />
          <div className="h-[2px] bg-[#fff]" />
          <div className="h-[2px] bg-[#999]" />
          <div className="h-[2px] rounded-b-[12px] bg-[#eee]" />
        </div>
      </div>

      <div className="absolute left-[528px] top-[2064px] flex h-[19px] w-[2670px] gap-[20px] overflow-hidden whitespace-nowrap font-['Inter',sans-serif] text-[25px] leading-none text-[#8a8a8a]">
        <span className="w-[222px] shrink-0">2024-11...9:41 AM</span>
        <span className="w-[245px] shrink-0" />
        {Array.from({ length: 9 }).map((_, i) => (
          <span key={i} className="w-[222px] shrink-0">2024-11...9:41 AM</span>
        ))}
      </div>

      <div className="relative z-[2]">
        <Dock />
      </div>

      <div className="absolute left-[2057px] top-[2220px] font-['Inter',sans-serif] text-[27px] leading-none text-white">noramipatients_g</div>
      <div className="absolute left-[1866px] top-[2092px] z-[3]">
        <svg width="44" height="46" viewBox="0 0 44 46">
          <ellipse cx="22" cy="23" rx="20" ry="22" fill="#e6ebef" stroke="#1d3557" strokeWidth="2.5" />
          <path d="M15 21 V14 a7 7 0 0 1 14 0 V21" fill="none" stroke="#74b65a" strokeWidth="2.5" />
          <rect x="12" y="21" width="20" height="15" rx="2" fill="#1d3557" />
          <circle cx="22" cy="28" r="2" fill="#fff" />
        </svg>
      </div>
      <Popup />
    </div>
  );
}
